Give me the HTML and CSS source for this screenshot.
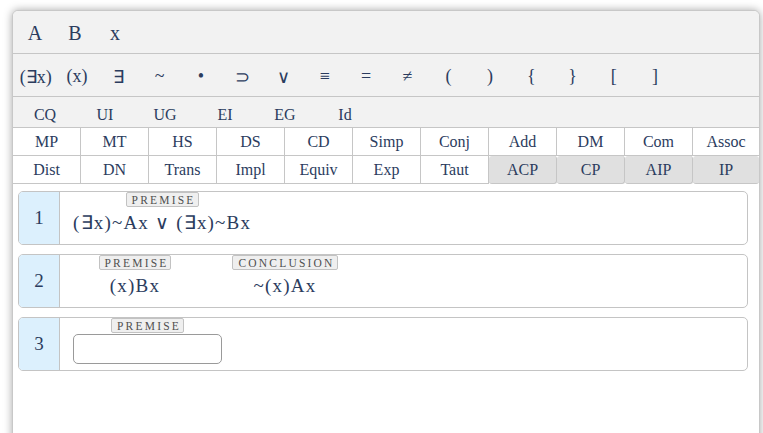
FILE: index.html
```html
<!DOCTYPE html>
<html>
<head>
<meta charset="utf-8">
<link rel="stylesheet" href="styles.css">
</head>
<body>
<div class="panel">
  <div class="row letters">
    <span class="key k40">A</span><span class="key k40">B</span><span class="key k40">x</span>
  </div>
  <div class="row symbols">
    <span class="key sym">(∃x)</span><span class="key sym">(x)</span><span class="key sym">∃</span><span class="key sym">~</span><span class="key sym">•</span><span class="key sym">⊃</span><span class="key sym">∨</span><span class="key sym">≡</span><span class="key sym">=</span><span class="key sym">≠</span><span class="key sym">(</span><span class="key sym">)</span><span class="key sym">{</span><span class="key sym">}</span><span class="key sym">[</span><span class="key sym">]</span>
  </div>
  <div class="row quant">
    <span class="key q">CQ</span><span class="key q">UI</span><span class="key q">UG</span><span class="key q">EI</span><span class="key q">EG</span><span class="key q">Id</span>
  </div>
  <div class="rules">
    <span class="cell">MP</span><span class="cell">MT</span><span class="cell">HS</span><span class="cell">DS</span><span class="cell">CD</span><span class="cell">Simp</span><span class="cell">Conj</span><span class="cell">Add</span><span class="cell">DM</span><span class="cell">Com</span><span class="cell last">Assoc</span>
    <span class="cell">Dist</span><span class="cell">DN</span><span class="cell">Trans</span><span class="cell">Impl</span><span class="cell">Equiv</span><span class="cell">Exp</span><span class="cell">Taut</span><span class="cell alt">ACP</span><span class="cell alt">CP</span><span class="cell alt">AIP</span><span class="cell alt last">IP</span>
  </div>
  <div class="proof">
    <div class="line">
      <div class="num">1</div>
      <div class="content">
        <div class="col">
          <span class="tag">Premise</span>
          <span class="formula">(∃x)~Ax ∨ (∃x)~Bx</span>
        </div>
      </div>
    </div>
    <div class="line">
      <div class="num">2</div>
      <div class="content">
        <div class="col c1">
          <span class="tag">Premise</span>
          <span class="formula">(x)Bx</span>
        </div>
        <div class="col c2">
          <span class="tag">Conclusion</span>
          <span class="formula">~(x)Ax</span>
        </div>
      </div>
    </div>
    <div class="line">
      <div class="num">3</div>
      <div class="content">
        <div class="col c3">
          <span class="tag">Premise</span>
          <input class="entry" type="text">
        </div>
      </div>
    </div>
  </div>
</div>
</body>
</html>
```
FILE: styles.css
```css
html, body {
  margin: 0;
  padding: 0;
  overflow: hidden;
  background: #ffffff;
}
body {
  font-family: "Liberation Serif", serif;
  color: #2b3c5e;
}
.panel {
  box-sizing: border-box;
  margin: 10px 0 0 12px;
  width: 748px;
  height: 460px;
  background: #ffffff;
  border: 1px solid #c8c8c8;
  border-radius: 6px 6px 0 0;
  box-shadow: 0 0 9px rgba(0, 0, 0, 0.35);
  overflow: hidden;
}
.row {
  display: flex;
  align-items: center;
  background: #f2f2f2;
  border-bottom: 1px solid #c6c6c6;
  padding-left: 2px;
}
.letters {
  height: 42px;
  font-size: 20px;
  border-radius: 5px 5px 0 0;
}
.symbols {
  height: 42px;
  font-size: 18px;
}
.quant {
  height: 30px;
  font-size: 16px;
}
.key {
  display: flex;
  justify-content: center;
  align-items: center;
  height: 100%;
}
.k40 { width: 40px; padding-top: 2px; box-sizing: border-box; }
.sym { width: 41.3px; padding-top: 3px; box-sizing: border-box; }
.q { width: 60px; padding-top: 6px; box-sizing: border-box; }
.rules {
  display: grid;
  grid-template-columns: repeat(10, 68px) 1fr;
  grid-auto-rows: 28px;
  font-size: 16px;
}
.cell {
  box-sizing: border-box;
  display: flex;
  justify-content: center;
  align-items: center;
  border-right: 1px solid #c6c6c6;
  border-bottom: 1px solid #c6c6c6;
  background: #ffffff;
  padding-top: 1px;
}
.cell.last { border-right: none; }
.cell.alt {
  background: #e0e0e0;
  border-radius: 3px;
}
.proof {
  padding: 7px 11px 0 5px;
}
.line {
  box-sizing: border-box;
  display: flex;
  height: 54px;
  margin-bottom: 9px;
  border: 1px solid #c4c4c4;
  border-radius: 5px;
  overflow: hidden;
}
.num {
  width: 40px;
  flex: none;
  display: flex;
  justify-content: center;
  align-items: center;
  background: #dcf0fd;
  border-right: 1px solid #c4c4c4;
  font-size: 19px;
}
.content {
  display: flex;
  padding-left: 13px;
}
.col {
  display: flex;
  flex-direction: column;
  align-items: center;
}
.c1 { width: 124px; }
.c2 { width: 148px; margin-left: 14px; }
.c3 { width: 149px; }
.tag {
  box-sizing: border-box;
  height: 15px;
  line-height: 14px;
  padding: 0 2px 0 5px;
  font-size: 11.5px;
  letter-spacing: 2.2px;
  text-transform: uppercase;
  color: #4f4f4f;
  background: #efefef;
  border: 1px solid #c2c2c2;
  border-radius: 2px;
}
.formula {
  margin-top: 4px;
  line-height: 24px;
  font-size: 19px;
  letter-spacing: 1.2px;
  white-space: nowrap;
}
.entry {
  box-sizing: border-box;
  margin: 1px 0 0 0;
  width: 149px;
  height: 30px;
  border: 1px solid #9a9a9a;
  border-radius: 5px;
  background: #ffffff;
  padding: 0 6px;
  font-family: "Liberation Serif", serif;
  font-size: 16px;
  outline: none;
}
```
